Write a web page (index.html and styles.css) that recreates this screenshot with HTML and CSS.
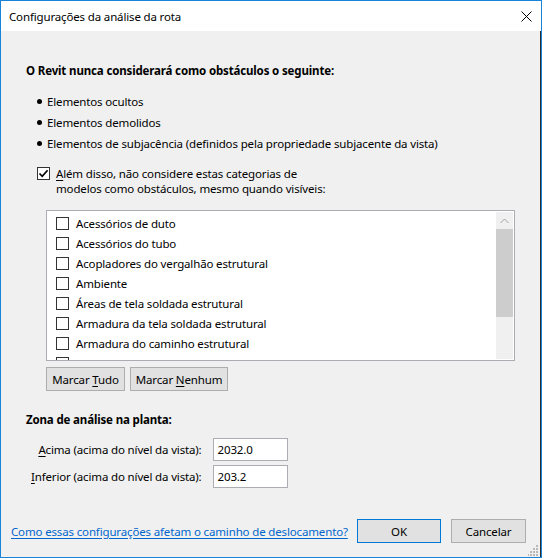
FILE: index.html
```html
<!DOCTYPE html>
<html lang="pt">
<head>
<meta charset="utf-8">
<title>Configurações da análise da rota</title>
<link rel="stylesheet" href="styles.css">
</head>
<body>
<div class="window">
  <div class="titlebar">
    <span class="title">Configurações da análise da rota</span>
    <svg class="close" width="11" height="11" viewBox="0 0 11 11"><path d="M0.5 0.5 L10.5 10.5 M10.5 0.5 L0.5 10.5" stroke="#000" stroke-width="1" fill="none"/></svg>
  </div>
  <div class="content">
    <div class="heading">O Revit nunca considerará como obstáculos o seguinte:</div>
    <ul class="bullets">
      <li>Elementos ocultos</li>
      <li>Elementos demolidos</li>
      <li>Elementos de subjacência (definidos pela propriedade subjacente da vista)</li>
    </ul>
    <div class="check-row">
      <span class="cb cb-dark"><svg width="11" height="11" viewBox="0 0 11 11"><path d="M1.5 5.5 L4.2 8.3 L9.6 2.2" stroke="#000" stroke-width="1.7" fill="none"/></svg></span>
      <span class="check-text"><span class="line"><u>A</u>lém disso, não considere estas categorias de</span><span class="line">modelos como obstáculos, mesmo quando visíveis:</span></span>
    </div>
    <div class="listbox">
      <div class="items">
        <div class="item"><span class="cb"></span>Acessórios de duto</div>
        <div class="item"><span class="cb"></span>Acessórios do tubo</div>
        <div class="item"><span class="cb"></span>Acopladores do vergalhão estrutural</div>
        <div class="item"><span class="cb"></span>Ambiente</div>
        <div class="item"><span class="cb"></span>Áreas de tela soldada estrutural</div>
        <div class="item"><span class="cb"></span>Armadura da tela soldada estrutural</div>
        <div class="item"><span class="cb"></span>Armadura do caminho estrutural</div>
        <div class="item"><span class="cb"></span></div>
      </div>
      <div class="scrollbar">
        <div class="arrow"><svg width="9" height="6" viewBox="0 0 9 6"><path d="M0.5 5 L4.5 1 L8.5 5" stroke="#a3a3a3" stroke-width="1" fill="none"/></svg></div>
        <div class="thumb"></div>
      </div>
    </div>
    <div class="list-buttons">
      <button class="btn btn-tudo">Marcar <u>T</u>udo</button>
      <button class="btn btn-nenhum">Marcar <u>N</u>enhum</button>
    </div>
    <div class="heading zone">Zona de análise na planta:</div>
    <div class="fields">
      <span class="field-label"><u>A</u>cima (acima do nível da vista):</span>
      <span class="field-input">2032.0</span>
      <span class="field-label"><u>I</u>nferior (acima do nível da vista):</span>
      <span class="field-input">203.2</span>
    </div>
    <div class="footer">
      <a class="link" href="#">Como essas configurações afetam o caminho de deslocamento?</a>
      <button class="btn btn-ok">OK</button>
      <button class="btn btn-cancel">Cancelar</button>
    </div>
    <svg class="grip" width="11" height="11" viewBox="0 0 11 11" fill="#b8b8b8">
      <rect x="8" y="0" width="2" height="2"/>
      <rect x="5" y="3" width="2" height="2"/><rect x="8" y="3" width="2" height="2"/>
      <rect x="2" y="6" width="2" height="2"/><rect x="5" y="6" width="2" height="2"/><rect x="8" y="6" width="2" height="2"/>
      <rect x="-1" y="9" width="2" height="2"/><rect x="2" y="9" width="2" height="2"/><rect x="5" y="9" width="2" height="2"/><rect x="8" y="9" width="2" height="2"/>
    </svg>
  </div>
</div>
</body>
</html>
```
FILE: styles.css
```css
* { box-sizing: border-box; }
html, body { margin: 0; padding: 0; }
body {
  font-family: "Noto Sans", "Open Sans", sans-serif;
  font-size: 11.5px;
  letter-spacing: -0.15px;
  color: #000;
  background: #fff;
}
u { text-decoration: underline; text-underline-offset: 2px; }

.window {
  width: 542px;
  height: 558px;
  border: 1px solid #1883d7;
  display: flex;
  flex-direction: column;
}
.titlebar {
  height: 30px;
  background: #fff;
  display: flex;
  align-items: center;
  padding-left: 8px;
  padding-right: 9px;
  flex: none;
}
.title { flex: 1; line-height: 16px; padding-top: 1px; }
.close { display: block; }

.content {
  flex: 1;
  background: #f0f0f0;
  border-right: 1px solid #2b2b2b;
  position: relative;
  display: flex;
  flex-direction: column;
  padding: 32px 0 0 25px;
}
.heading { font-weight: bold; line-height: 15px; }
.bullets {
  list-style: none;
  margin: 13px 0 0 0;
  padding: 0;
}
.bullets li {
  line-height: 21px;
  position: relative;
  padding-left: 21px;
}
.bullets li::before {
  content: "";
  position: absolute;
  left: 11px;
  top: 8px;
  width: 5px;
  height: 5px;
  border-radius: 50%;
  background: #000;
}
.check-row {
  display: flex;
  align-items: flex-start;
  margin-top: 12px;
  margin-left: 11px;
}
.cb {
  width: 13px;
  height: 13px;
  border: 1px solid #333;
  background: #fff;
  display: inline-flex;
  align-items: center;
  justify-content: center;
  flex: none;
}
.check-row .cb { margin-top: 1px; }
.check-text { margin-left: 6px; line-height: 15px; display: flex; flex-direction: column; }
.line { display: block; white-space: nowrap; }

.listbox {
  margin-top: 14px;
  margin-left: 20px;
  width: 469px;
  height: 151px;
  border: 1px solid #abadb3;
  background: #fff;
  display: flex;
  overflow: hidden;
}
.items { flex: 1; padding: 2px 0 0 9px; overflow: hidden; }
.item {
  height: 20px;
  display: flex;
  align-items: center;
}
.item .cb { margin-right: 7px; }
.scrollbar {
  width: 17px;
  margin: 1px 1px 1px 0;
  background: #f0f0f0;
  display: flex;
  flex-direction: column;
}
.arrow {
  height: 17px;
  display: flex;
  align-items: center;
  justify-content: center;
}
.thumb { height: 88px; background: #cdcdcd; }

.list-buttons {
  display: flex;
  gap: 5px;
  margin-top: 6px;
  margin-left: 20px;
}
.btn {
  font-family: inherit;
  font-size: 11.5px;
  letter-spacing: -0.15px;
  color: #000;
  background: #e1e1e1;
  border: 1px solid #adadad;
  height: 24px;
  padding: 0;
  border-radius: 0;
}
.btn-tudo { width: 79px; }
.btn-nenhum { width: 98px; }

.zone { margin-top: 21px; }
.fields {
  display: grid;
  grid-template-columns: auto 75px;
  column-gap: 11px;
  row-gap: 4px;
  justify-items: end;
  align-items: center;
  margin-top: 11px;
  margin-left: 5px;
  width: max-content;
}
.field-label { white-space: nowrap; }
.field-input {
  justify-self: stretch;
  height: 23px;
  background: #fff;
  border: 1px solid #abadb3;
  padding: 0 0 0 4px;
  line-height: 21px;
}

.footer {
  margin-top: auto;
  margin-left: -15px;
  padding-right: 14px;
  padding-bottom: 14px;
  display: flex;
  align-items: center;
}
.link {
  color: #0066cc;
  text-decoration: underline;
  text-underline-offset: 2px;
  white-space: nowrap;
  flex: 1;
}
.btn-ok { width: 84px; border-color: #0078d7; }
.btn-cancel { width: 75px; margin-left: 10px; }

.grip {
  position: absolute;
  right: 1px;
  bottom: 1px;
}
```
